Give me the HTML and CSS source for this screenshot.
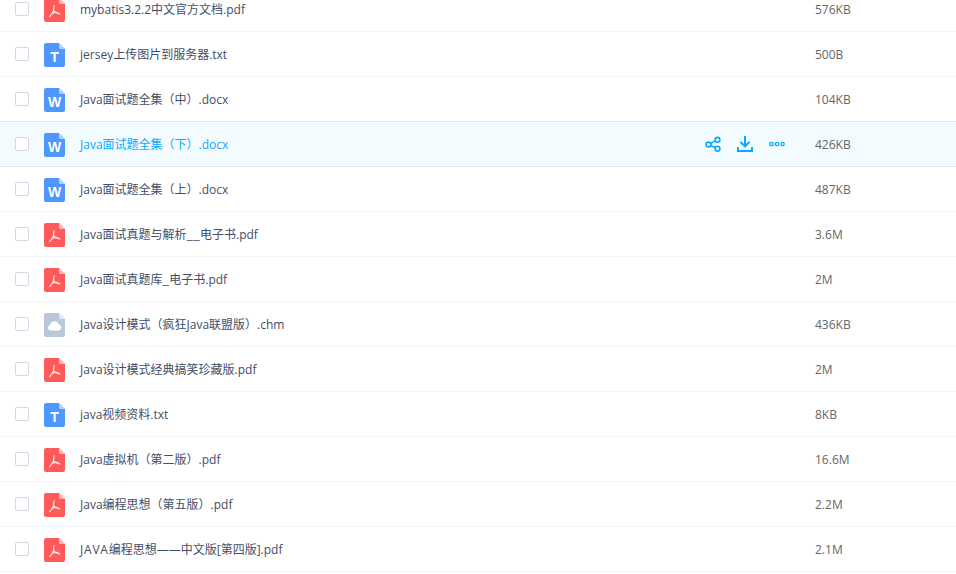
FILE: index.html
```html
<!DOCTYPE html>
<html lang="zh-CN">

<head>
    <meta charset="utf-8">
    <title>files</title>
    <link rel="stylesheet" href="styles.css">
</head>

<body>
<svg class="defs" width="0" height="0">
    <symbol id="sheet" viewBox="0 0 21 24">
        <path d="M2 0h13l6 6v16a2 2 0 0 1-2 2H2a2 2 0 0 1-2-2V2a2 2 0 0 1 2-2z"/>
    </symbol>
    <symbol id="fold" viewBox="0 0 21 24">
        <path d="M15 0l6 6h-4.500a1.500 1.500 0 0 1-1.500-1.500z" fill="#fff" fill-opacity=".55"/>
    </symbol>
    <symbol id="mark-pdf" viewBox="0 0 21 24">
        <path d="M10.300 7.500c-.8 0 .1 3.800-1.500 7.100-1 2-2.400 3.200-3.200 4M9.500 12.500c1.500 2 3.600 3.200 6.300 3.400M7.800 15.500c1.800-.7 3.800-1.200 6-1.200" fill="none" stroke="#fff" stroke-opacity=".85" stroke-width="1.200" stroke-linecap="round"/>
    </symbol>
    <symbol id="mark-cloud" viewBox="0 0 21 24">
        <path d="M6.500 17.500a2.800 2.800 0 0 1-.5-5.500 4.600 4.600 0 0 1 8.900-.4 3 3 0 0 1 .1 5.900z" fill="#fff"/>
    </symbol>
</svg>

<div class="list">
    <div class="row">
        <span class="check"></span>
        <svg class="ficon pdf"><use href="#sheet"/><use href="#fold"/><use href="#mark-pdf"/></svg>
        <span class="name">mybatis3.2.2中文官方文档.pdf</span>
        <span class="size">576KB</span>
    </div>
    <div class="row">
        <span class="check"></span>
        <span class="ficon-wrap"><svg class="ficon txt"><use href="#sheet"/><use href="#fold"/></svg><b class="letter">T</b></span>
        <span class="name">jersey上传图片到服务器.txt</span>
        <span class="size">500B</span>
    </div>
    <div class="row">
        <span class="check"></span>
        <span class="ficon-wrap"><svg class="ficon txt"><use href="#sheet"/><use href="#fold"/></svg><b class="letter">W</b></span>
        <span class="name">Java面试题全集（中）.docx</span>
        <span class="size">104KB</span>
    </div>
    <div class="row active">
        <span class="check"></span>
        <span class="ficon-wrap"><svg class="ficon txt"><use href="#sheet"/><use href="#fold"/></svg><b class="letter">W</b></span>
        <span class="name">Java面试题全集（下）.docx</span>
        <div class="tools">
            <svg class="tool" width="16" height="16" viewBox="0 0 16 16" fill="none" stroke="#09aaff" stroke-width="1.600">
                <circle cx="3.500" cy="8.500" r="2.400"/>
                <circle cx="12.500" cy="3.800" r="2.400"/>
                <circle cx="12.500" cy="12.700" r="2.400"/>
                <path d="M5.700 7.400l4.600-2.500M5.700 9.600l4.600 2.100"/>
            </svg>
            <svg class="tool" width="16" height="16" viewBox="0 0 16 16" fill="none" stroke="#09aaff" stroke-width="2">
                <path d="M8 0v10M3.500 6L8 10.300 12.500 6M1 11v4h14v-4"/>
            </svg>
            <svg class="tool" width="16" height="6" viewBox="0 0 16 6" fill="none" stroke="#09aaff" stroke-width="1.300">
                <circle cx="2.500" cy="3" r="1.700"/>
                <circle cx="8" cy="3" r="1.700"/>
                <circle cx="13.500" cy="3" r="1.700"/>
            </svg>
        </div>
        <span class="size">426KB</span>
    </div>
    <div class="row">
        <span class="check"></span>
        <span class="ficon-wrap"><svg class="ficon txt"><use href="#sheet"/><use href="#fold"/></svg><b class="letter">W</b></span>
        <span class="name">Java面试题全集（上）.docx</span>
        <span class="size">487KB</span>
    </div>
    <div class="row">
        <span class="check"></span>
        <svg class="ficon pdf"><use href="#sheet"/><use href="#fold"/><use href="#mark-pdf"/></svg>
        <span class="name">Java面试真题与解析<span class="wide">__</span>电子书.pdf</span>
        <span class="size">3.6M</span>
    </div>
    <div class="row">
        <span class="check"></span>
        <svg class="ficon pdf"><use href="#sheet"/><use href="#fold"/><use href="#mark-pdf"/></svg>
        <span class="name">Java面试真题库<span class="wide">_</span>电子书.pdf</span>
        <span class="size">2M</span>
    </div>
    <div class="row">
        <span class="check"></span>
        <svg class="ficon chm"><use href="#sheet"/><use href="#fold"/><use href="#mark-cloud"/></svg>
        <span class="name">Java设计模式（疯狂Java联盟版）.chm</span>
        <span class="size">436KB</span>
    </div>
    <div class="row">
        <span class="check"></span>
        <svg class="ficon pdf"><use href="#sheet"/><use href="#fold"/><use href="#mark-pdf"/></svg>
        <span class="name">Java设计模式经典搞笑珍藏版.pdf</span>
        <span class="size">2M</span>
    </div>
    <div class="row">
        <span class="check"></span>
        <span class="ficon-wrap"><svg class="ficon txt"><use href="#sheet"/><use href="#fold"/></svg><b class="letter">T</b></span>
        <span class="name">java视频资料.txt</span>
        <span class="size">8KB</span>
    </div>
    <div class="row">
        <span class="check"></span>
        <svg class="ficon pdf"><use href="#sheet"/><use href="#fold"/><use href="#mark-pdf"/></svg>
        <span class="name">Java虚拟机（第二版）.pdf</span>
        <span class="size">16.6M</span>
    </div>
    <div class="row">
        <span class="check"></span>
        <svg class="ficon pdf"><use href="#sheet"/><use href="#fold"/><use href="#mark-pdf"/></svg>
        <span class="name">Java编程思想（第五版）.pdf</span>
        <span class="size">2.2M</span>
    </div>
    <div class="row">
        <span class="check"></span>
        <svg class="ficon pdf"><use href="#sheet"/><use href="#fold"/><use href="#mark-pdf"/></svg>
        <span class="name"><span class="caps">JAVA</span>编程思想——中文版[第四版].pdf</span>
        <span class="size">2.1M</span>
    </div>
</div>
</body>

</html>
```

FILE: styles.css
```css
* {
    margin: 0;
    padding: 0;
    box-sizing: border-box;
}

html, body {
    height: 100%;
    overflow: hidden;
    background-color: #fff;
}

body {
    font-family: "Open Sans", "Noto Sans CJK SC", sans-serif;
    font-size: 12px;
    color: #424e67;
}

.defs {
    display: block;
}

/* first row is scrolled partly out of view */
.list {
    margin-top: -13px;
}

.row {
    display: flex;
    align-items: center;
    height: 45px;
    padding-left: 15px;
    border-bottom: 1px solid #f2f6fd;
}

.row.active {
    height: 46px;
    margin-top: -1px;
    border-top: 1px solid #daebfe;
    border-bottom: 1px solid #daebfe;
    background-color: #f4fbff;
}

.row.active .name {
    color: #09aaff;
}

.check {
    flex: none;
    width: 14px;
    height: 14px;
    margin-right: 15px;
    border: 1px solid #d0d9e5;
    border-radius: 2px;
    background-color: #fff;
}

.ficon-wrap {
    position: relative;
    flex: none;
    display: block;
    width: 21px;
    height: 24px;
    margin-top: 2px;
}

.ficon {
    flex: none;
    display: block;
    width: 21px;
    height: 24px;
}

svg.ficon {
    margin-top: 2px;
}

.ficon-wrap svg.ficon {
    margin-top: 0;
}

.pdf {
    fill: #fe5a59;
}

.txt {
    fill: #4d97ff;
}

.chm {
    fill: #b9c8d8;
}

.letter {
    position: absolute;
    left: 0;
    right: 0;
    top: 6px;
    font-family: "Liberation Sans", sans-serif;
    font-size: 14px;
    line-height: 16px;
    font-weight: bold;
    text-align: center;
    color: #fff;
}

.name {
    flex: 1;
    margin-left: 15px;
    white-space: nowrap;
}

/* underscores run wider in the original font */
.wide {
    font-family: "Noto Sans CJK SC", sans-serif;
}

.caps {
    letter-spacing: .8px;
}

.tools {
    display: flex;
    align-items: center;
    gap: 16px;
    margin-right: 30px;
}

.tool {
    display: block;
}

.size {
    flex: none;
    width: 141px;
    color: #666;
}
```
